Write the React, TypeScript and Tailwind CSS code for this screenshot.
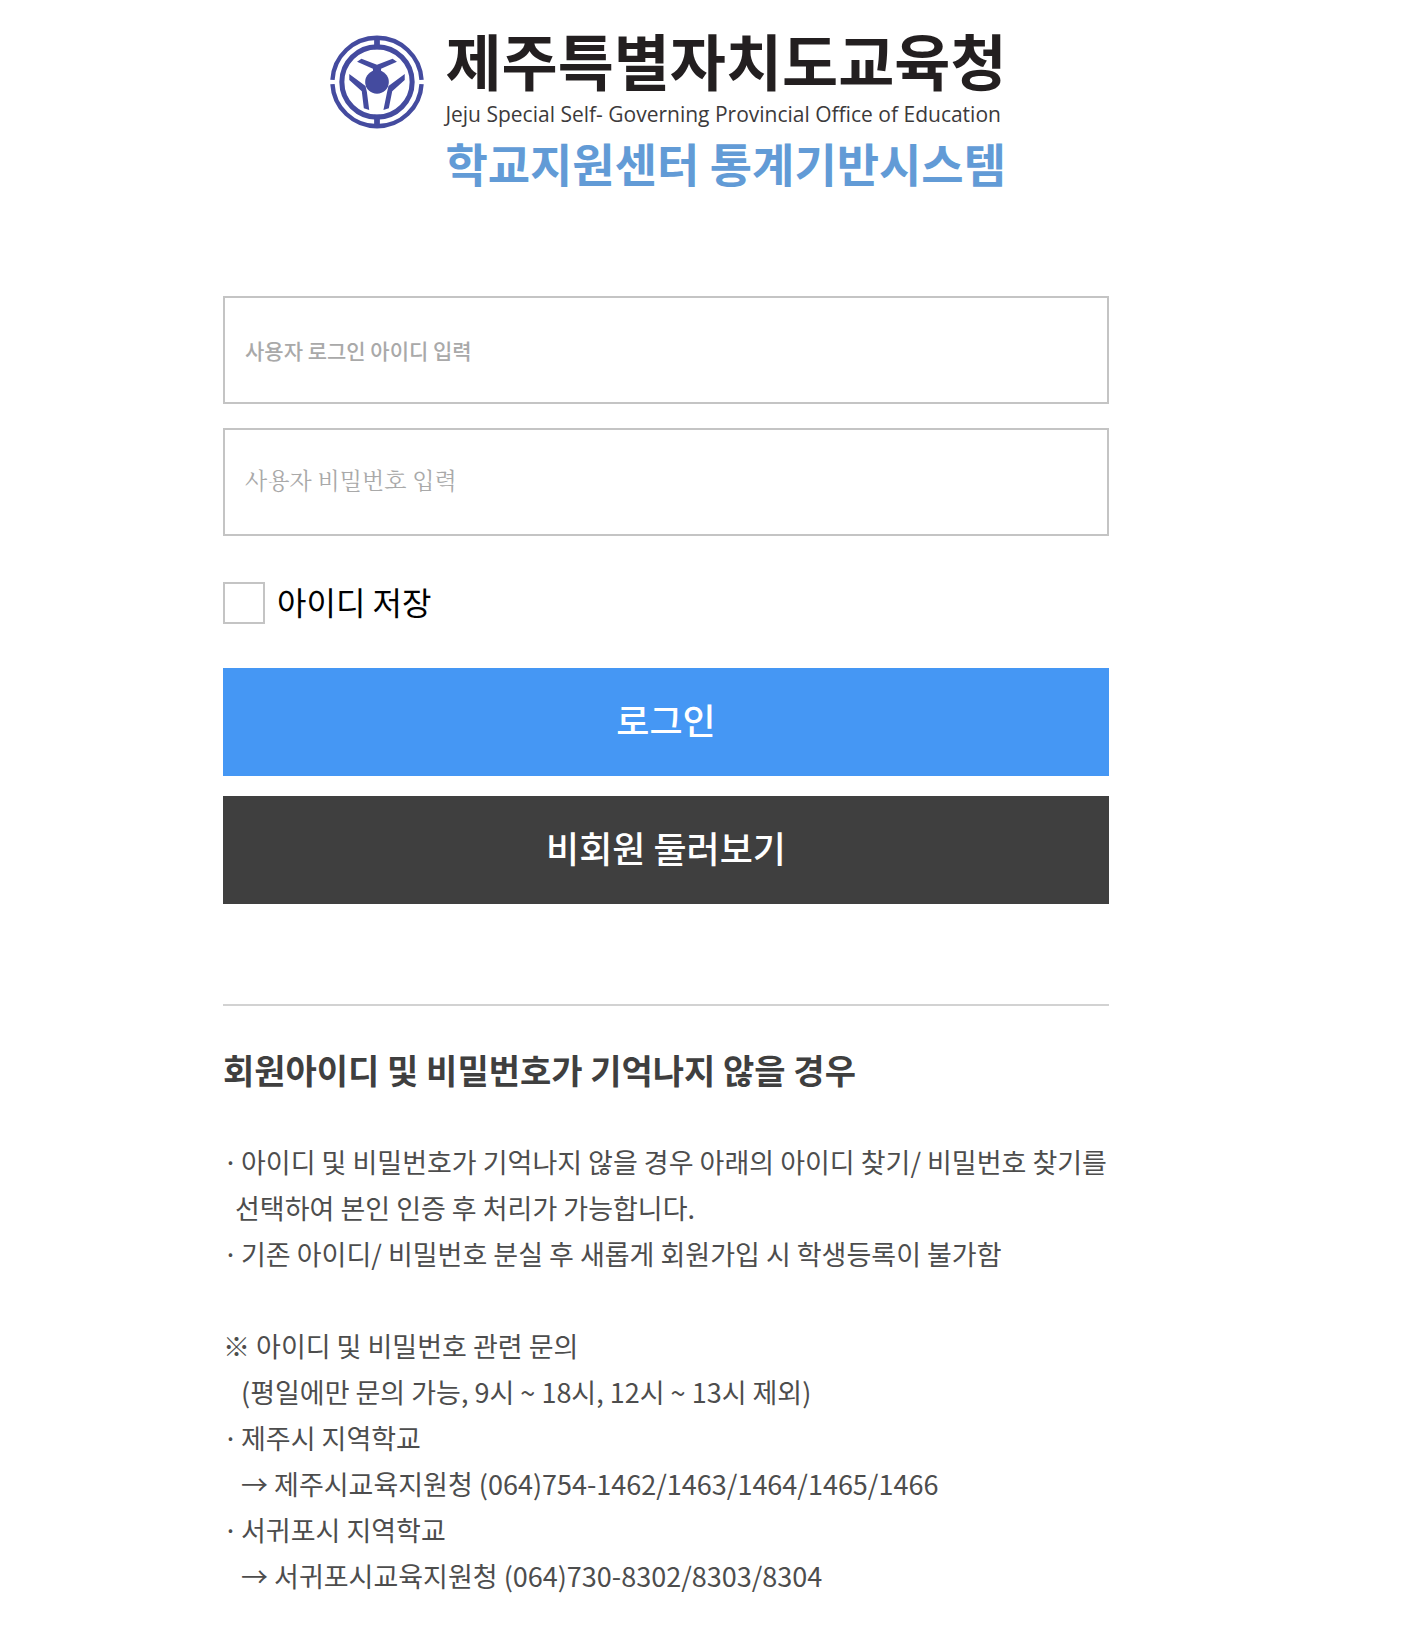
import React from "react";
import { useState } from "react";

const Emblem = () => (
  <svg
    className="w-24 h-24 shrink-0"
    viewBox="28 45 284 284"
    fill="none"
    role="img"
    aria-label="제주특별자치도교육청"
  >
    <g stroke="#444b9f">
      <path strokeWidth="13" d="M38.2 181A132 132 0 0 1 301.8 181" />
      <path strokeWidth="13" d="M38.2 193A132 132 0 0 0 301.8 193" />
      <circle strokeWidth="15" cx="170" cy="187" r="104" />
      <path strokeWidth="17" d="M170 54V90M170 284V320" />
    </g>
    <g fill="#444b9f">
      <circle cx="170" cy="187" r="35" />
      <path d="M111 127L124 118L170 136L216 118L229 127L182 148V158H158V148Z" />
      <path d="M88 163L136 199L140 216L147 270L131 265L125 214L88 181Z" />
      <path d="M252 163L204 199L200 216L189 270L205 265L215 214L252 181Z" />
    </g>
  </svg>
);

const Logo = () => (
  <header className="flex justify-center gap-5 pl-1 pt-6">
    <div className="pt-2.5">
      <Emblem />
    </div>
    <div className="whitespace-nowrap">
      <h1 className="text-[61px] leading-[72px] font-bold text-[#231f20]">
        제주특별자치도교육청
      </h1>
      <p className="font-['Open_Sans','Noto_Sans',sans-serif] text-[21px] leading-[36px] text-[#3c3a3b]">
        Jeju Special Self- Governing Provincial Office of Education
      </p>
      <p className="text-[46px] leading-[60px] font-bold text-[#629bd6]">
        학교지원센터 통계기반시스템
      </p>
    </div>
  </header>
);

const LoginForm = () => {
  const [saveId, setSaveId] = useState(false);

  return (
    <form className="pt-[104px]" onSubmit={(e) => e.preventDefault()}>
      <input
        type="text"
        aria-label="사용자 로그인 아이디"
        placeholder="사용자 로그인 아이디 입력"
        className="block w-full h-[108px] px-5 border-2 border-[#c4c4c4] outline-none text-[21px] font-medium placeholder:text-[#a9a9a9] focus:border-[#4597f4]"
      />
      <input
        type="password"
        aria-label="사용자 비밀번호"
        placeholder="사용자 비밀번호 입력"
        className="block w-full h-[108px] mt-6 px-5 pb-1.5 border-2 border-[#c4c4c4] outline-none font-['Noto_Serif_CJK_KR','Noto_Sans_CJK_KR',serif] text-[23px] placeholder:text-[#a9a9a9] focus:border-[#4597f4]"
      />
      <label className="flex items-center gap-3 w-fit mt-[46px] text-[32px] leading-[38px] text-black">
        <input
          type="checkbox"
          checked={saveId}
          onChange={() => setSaveId(!saveId)}
          className="appearance-none w-[42px] h-[42px] border-2 border-[#c4c4c4] checked:bg-[#4597f4]"
        />
        <span className="pb-1">아이디 저장</span>
      </label>
      <button
        type="submit"
        className="block w-full h-[108px] mt-11 pb-1.5 bg-[#4597f4] text-[36px] font-medium text-white"
      >
        로그인
      </button>
      <button
        type="button"
        className="block w-full h-[108px] mt-5 pb-1.5 bg-[#3f3f3f] text-[36px] font-medium text-white"
      >
        비회원 둘러보기
      </button>
    </form>
  );
};

const Bullet = ({ children }: { children: React.ReactNode }) => (
  <li className="flex">
    <span className="w-[18px] shrink-0">·</span>
    <div>{children}</div>
  </li>
);

const Help = () => (
  <section className="mt-[100px] pt-[42px] border-t-2 border-[#d2d2d2] text-[#4d4d4d]">
    <h2 className="text-[34px] leading-[44px] font-bold text-[#3f3f3f]">
      회원아이디 및 비밀번호가 기억나지 않을 경우
    </h2>
    <div className="mt-[47px] text-[27px] leading-[46px] whitespace-nowrap">
      <ul>
        <Bullet>
          아이디 및 비밀번호가 기억나지 않을 경우 아래의 아이디 찾기/ 비밀번호
          찾기를
          <br />
          <span className="-ml-1.5">
            선택하여 본인 인증 후 처리가 가능합니다.
          </span>
        </Bullet>
        <Bullet>
          기존 아이디/ 비밀번호 분실 후 새롭게 회원가입 시 학생등록이 불가함
        </Bullet>
      </ul>
      <p className="mt-[46px]">※ 아이디 및 비밀번호 관련 문의</p>
      <p className="pl-[18px]">(평일에만 문의 가능, 9시 ~ 18시, 12시 ~ 13시 제외)</p>
      <ul>
        <Bullet>
          제주시 지역학교
          <br />→ 제주시교육지원청 (064)754-1462/1463/1464/1465/1466
        </Bullet>
        <Bullet>
          서귀포시 지역학교
          <br />→ 서귀포시교육지원청 (064)730-8302/8303/8304
        </Bullet>
      </ul>
    </div>
  </section>
);

const App = () => {
  return (
    <div className="min-h-screen bg-white pl-[223px] pr-[297px] pb-10 font-['Noto_Sans_CJK_KR',sans-serif]">
      <Logo />
      <LoginForm />
      <Help />
    </div>
  );
};

export default App;
